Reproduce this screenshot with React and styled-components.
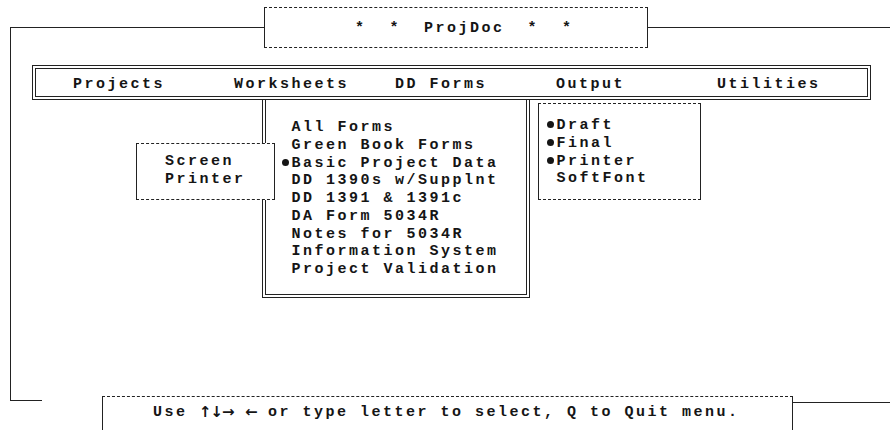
import styled, { createGlobalStyle } from "styled-components";

const formItems = [
  { label: "All Forms" },
  { label: "Green Book Forms" },
  { label: "Basic Project Data", on: true },
  { label: "DD 1390s w/Supplnt" },
  { label: "DD 1391 & 1391c" },
  { label: "DA Form 5034R" },
  { label: "Notes for 5034R" },
  { label: "Information System" },
  { label: "Project Validation" },
];

const outputItems = [
  { label: "Draft", on: true },
  { label: "Final", on: true },
  { label: "Printer", on: true },
  { label: "SoftFont" },
];

const menuItems = ["Projects", "Worksheets", "DD Forms", "Output", "Utilities"];

const App = () => {
  return (
    <>
      <GlobalStyle />
      <Screen>
        <Frame>
          <TitleBox>{"*  *  ProjDoc  *  *"}</TitleBox>
          <MenuBar>
            {menuItems.map((m) => (
              <MenuItem key={m}>{m}</MenuItem>
            ))}
          </MenuBar>
          <MenuArea>
            <FormsMenu>
              {formItems.map((it) => (
                <Row key={it.label}>
                  <Mark $on={it.on} />
                  <span>{it.label}</span>
                </Row>
              ))}
            </FormsMenu>
            <DeviceMenu>
              <Row>Screen</Row>
              <Row>Printer</Row>
            </DeviceMenu>
            <OutputMenu>
              {outputItems.map((it) => (
                <Row key={it.label}>
                  <Mark $on={it.on} />
                  <span>{it.label}</span>
                </Row>
              ))}
            </OutputMenu>
          </MenuArea>
        </Frame>
        <BottomRow>
          <Stub />
          <StatusBox>
            {"Use "}
            <Arrow>↑</Arrow>
            <Arrow>↓</Arrow>
            <Arrow>→</Arrow>
            {" "}
            <Arrow>←</Arrow>
            {" or type letter to select, Q to Quit menu."}
          </StatusBox>
          <RightLine />
        </BottomRow>
      </Screen>
    </>
  );
};

//Styled Components

const GlobalStyle = createGlobalStyle`
  html, body {
    margin: 0;
    padding: 0;
    background: #fff;
  }
`;

const Screen = styled.div`
  position: relative;
  width: 890px;
  height: 430px;
  overflow: hidden;
  box-sizing: border-box;
  padding: 7px 0 0 10px;
  background: #fff;
  color: #151515;
  font-family: "Liberation Mono", "DejaVu Sans Mono", monospace;
  font-size: 15px;
  font-weight: 700;
  letter-spacing: 2.5px;
`;

const Frame = styled.fieldset`
  margin: 0;
  padding: 0;
  min-width: 0;
  width: 900px;
  height: 393px;
  box-sizing: border-box;
  border: none;
  border-top: 1px solid #222;
  border-left: 1px solid #222;
`;

const TitleBox = styled.legend`
  margin-left: 253px;
  width: 384px;
  height: 41px;
  box-sizing: border-box;
  padding: 2px 0 0 90px;
  border: 1px solid #222;
  border-top-style: dashed;
  border-bottom-style: dashed;
  line-height: 37px;
  white-space: pre;
`;

const MenuBar = styled.div`
  display: flex;
  margin: 17px 0 0 21px;
  width: 839px;
  height: 35px;
  box-sizing: border-box;
  border: 4px double #222;
  padding: 7px 0 0 37px;
`;

const MenuItem = styled.div`
  flex: none;
  width: 161px;
  line-height: 17.75px;
  white-space: pre;
`;

const MenuArea = styled.div`
  position: relative;
  height: 300px;
`;

const FormsMenu = styled.div`
  position: absolute;
  left: 251px;
  top: 0;
  width: 268px;
  height: 198px;
  box-sizing: border-box;
  border: 4px double #222;
  border-top: none;
  padding: 19px 0 0 14px;
  background: #fff;
  z-index: 1;
`;

const DeviceMenu = styled.div`
  position: absolute;
  left: 125px;
  top: 43px;
  width: 139px;
  height: 57px;
  box-sizing: border-box;
  border: 1px solid #222;
  border-top-style: dashed;
  border-bottom-style: dashed;
  padding: 9px 0 0 28px;
  background: #fff;
  z-index: 2;
`;

const OutputMenu = styled.div`
  position: absolute;
  left: 527px;
  top: 3px;
  width: 163px;
  height: 97px;
  box-sizing: border-box;
  border: 1px solid #222;
  border-top-style: dashed;
  border-bottom-style: dashed;
  padding: 13px 0 0 6px;
  background: #fff;
`;

const Row = styled.div`
  display: flex;
  height: 17.75px;
  line-height: 17.75px;
  white-space: pre;
`;

const Mark = styled.span`
  flex: none;
  width: 11.5px;
  display: flex;
  align-items: center;
  justify-content: center;

  &::before {
    content: "";
    width: 7px;
    height: 7px;
    margin-top: -2px;
    border-radius: 50%;
    background: ${(p) => (p.$on ? "#151515" : "transparent")};
  }
`;

const Arrow = styled.span`
  display: inline-block;
  width: 11.5px;
  text-align: center;
  letter-spacing: 0;
  font-family: "DejaVu Sans", sans-serif;
  font-size: 15px;
  font-weight: 700;
  line-height: 17.75px;
  vertical-align: top;
`;

const BottomRow = styled.div`
  display: flex;
  align-items: flex-start;
  margin-top: -4px;
`;

const Stub = styled.div`
  flex: none;
  width: 32px;
  margin-top: 4px;
  border-top: 1px solid #222;
`;

const StatusBox = styled.div`
  flex: none;
  margin-left: 60px;
  width: 691px;
  height: 44px;
  box-sizing: border-box;
  border: 1px solid #222;
  border-top-style: dashed;
  padding: 7px 0 0 50px;
  line-height: 17.75px;
  white-space: pre;
`;

const RightLine = styled.div`
  flex: 1;
  margin-top: 6px;
  border-top: 1px solid #222;
`;

export default App;
